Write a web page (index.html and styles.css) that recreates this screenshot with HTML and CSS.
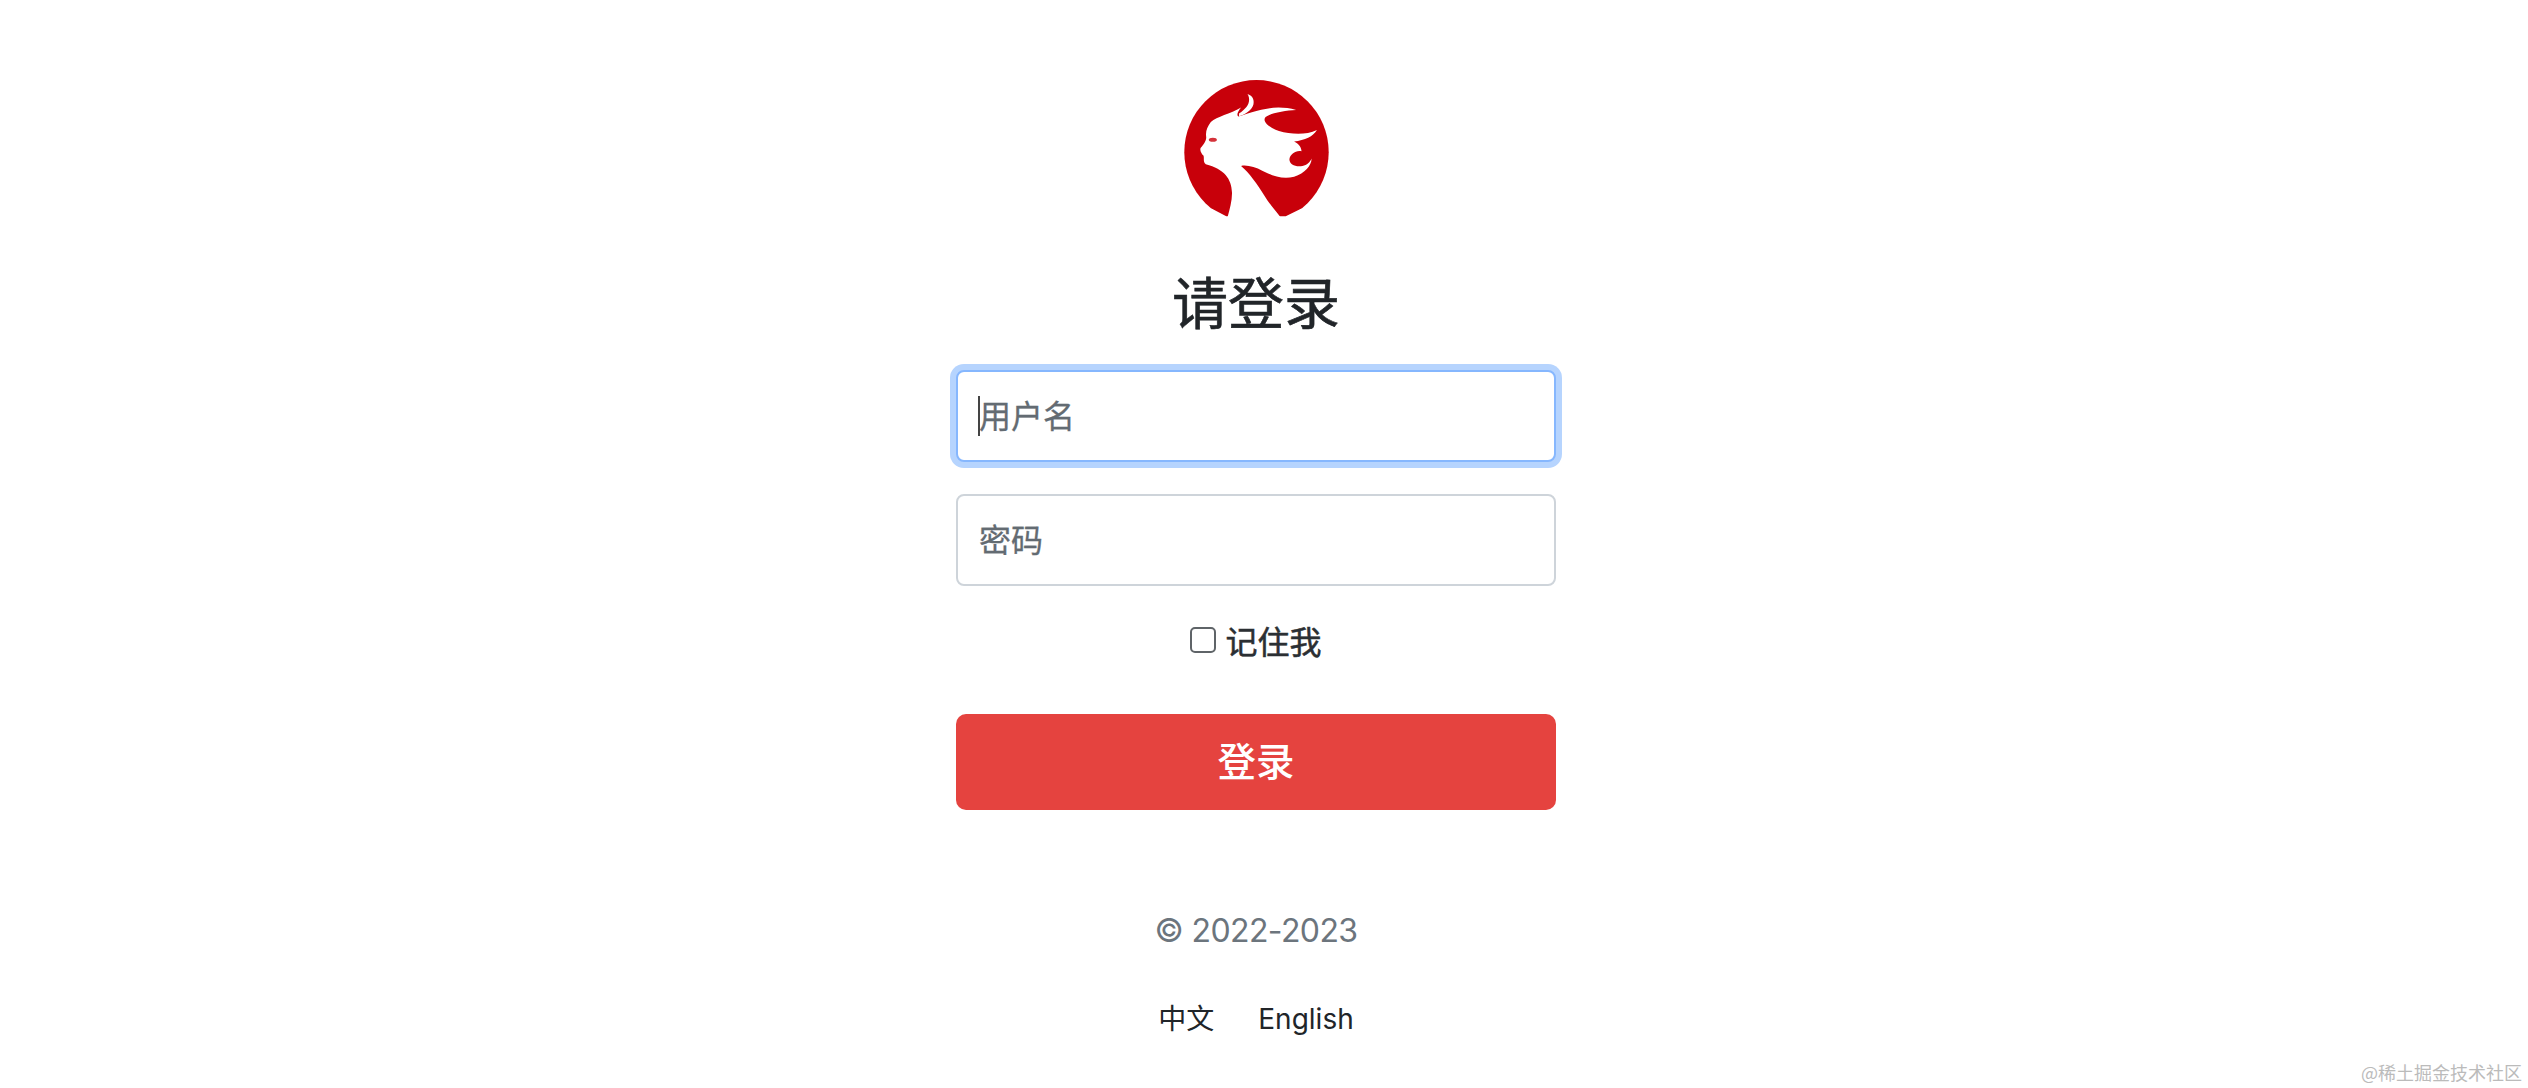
FILE: index.html
```html
<!DOCTYPE html>
<html lang="zh-CN">
  <head>
    <meta charset="utf-8" />
    <title>请登录</title>
    <link rel="stylesheet" href="styles.css">
  </head>
  <body>
    <main class="container">
      <form class="form-signin">
        <svg class="logo" viewBox="103 60 430 408" aria-hidden="true">
          <circle cx="318" cy="275" r="215" fill="#c8000a" />
          <!-- head and hair -->
          <path fill="#fff" d="M226 490 C232 465 246 425 245 395 C244 355 222 325 167 311 C158 305 163 292 160 285 C154 280 148 268 152 262 C160 252 170 240 168 228 C166 212 172 198 182 185 C200 168 240 162 272 142 C262 155 258 163 264 169 C285 162 310 152 345 146 C375 140 405 141 436 149 C405 151 365 156 345 170 C335 182 350 200 385 212 C420 222 465 225 498 209 C487 228 462 240 430 243 C445 250 452 262 452 272 C436 268 418 280 416 296 C416 312 435 320 455 316 C468 314 478 305 482 294 C482 315 462 338 430 348 C395 357 365 345 335 330 C315 320 290 312 272 316 C296 335 320 370 345 410 C358 432 380 452 404 490 Z" />
          <path fill="#fff" d="M266 160 C285 146 296 135 296 118 C296 112 294 106 291 102 C305 106 312 118 309 132 C304 150 285 162 266 168 Z" />
          <!-- bottom edge comes to two points either side of the neck -->
          <path fill="#fff" d="M405 466 L452 443 L470 500 L170 500 L184 443 L228 466 Z" />
          <ellipse class="logo-eye" cx="188" cy="238" rx="12" ry="6" />
          <circle cx="438" cy="295" r="17" fill="#c8000a" />
        </svg>
        <h1 class="form-title">请登录</h1>
        <div class="field">
          <input class="form-control is-focused" type="text" placeholder="用户名" />
          <span class="caret"></span>
        </div>
        <div class="field">
          <input class="form-control" type="password" placeholder="密码" />
        </div>
        <label class="remember">
          <input class="remember-box" type="checkbox" />
          <span>记住我</span>
        </label>
        <button class="btn-login" type="button">登录</button>
        <p class="copyright">© 2022-2023</p>
        <div class="lang-links">
          <a href="#">中文</a>
          <a href="#">English</a>
        </div>
      </form>
    </main>
    <div class="watermark">@稀土掘金技术社区</div>
  </body>
</html>
```

FILE: styles.css
```css
html, body {
  margin: 0;
  height: 1088px;
  background-color: #fff;
  overflow: hidden;
}

body {
  font-family: Inter, "Noto Sans CJK SC", sans-serif;
  color: #212529;
}

.container {
  padding-left: 956px;
  padding-top: 80px;
}

.form-signin {
  width: 600px;
  display: flex;
  flex-direction: column;
  align-items: center;
}

.logo {
  width: 145px;
  height: 137px;
  display: block;
  filter: blur(0.5px);
}

.logo-eye {
  fill: #d4323a;
}

.form-title {
  margin: 43px 0 0;
  font-size: 56px;
  line-height: 80px;
  font-weight: 400;
  -webkit-text-stroke: 0.6px #212529;
  font-family: "Noto Sans CJK SC", sans-serif;
}

.field {
  position: relative;
  width: 100%;
}

.field:first-of-type {
  margin-top: 30px;
}

.field + .field {
  margin-top: 32px;
}

.form-control {
  display: block;
  width: 100%;
  height: 92px;
  box-sizing: border-box;
  padding: 0 21px 5px;
  border: 2px solid #ced4da;
  border-radius: 8px;
  background: #fff;
  font-family: "Noto Sans CJK SC", sans-serif;
  font-size: 32px;
  color: #212529;
  outline: none;
}

.form-control::placeholder {
  color: #636b72;
  opacity: 1;
  -webkit-text-stroke: 0.3px #636b72;
}

.form-control.is-focused {
  border-color: #86b7fe;
  box-shadow: 0 0 0 6px #b6d4fe;
}

.caret {
  position: absolute;
  left: 22px;
  top: 26px;
  width: 2px;
  height: 40px;
  background-color: #444;
}

.remember {
  margin-top: 30px;
  display: flex;
  align-items: center;
  gap: 9px;
  font-size: 32px;
  line-height: 48px;
  font-weight: 400;
  -webkit-text-stroke: 0.5px #2b2f33;
  color: #2b2f33;
  font-family: "Noto Sans CJK SC", sans-serif;
}

.remember-box {
  appearance: none;
  margin: 0;
  width: 26px;
  height: 26px;
  box-sizing: border-box;
  border: 2px solid #5f6468;
  border-radius: 5px;
  background: #fff;
}

.btn-login {
  margin-top: 50px;
  width: 100%;
  height: 96px;
  padding: 0 0 6px;
  border: none;
  border-radius: 10px;
  background-color: #e5433f;
  color: #fff;
  font-family: "Noto Sans CJK SC", sans-serif;
  font-size: 38.4px;
  font-weight: 500;
  cursor: pointer;
}

.copyright {
  margin: 97px 0 0;
  font-size: 32px;
  line-height: 48px;
  letter-spacing: -0.6px;
  color: #6c757d;
}

.lang-links {
  margin-top: 42px;
  display: flex;
  gap: 44px;
  font-size: 28px;
  line-height: 44px;
}

.lang-links a {
  color: #212529;
  text-decoration: none;
}

.watermark {
  position: absolute;
  right: 6px;
  bottom: 6px;
  font-family: "Noto Sans CJK SC", sans-serif;
  font-size: 18px;
  line-height: 20px;
  color: #bbb;
}
```
